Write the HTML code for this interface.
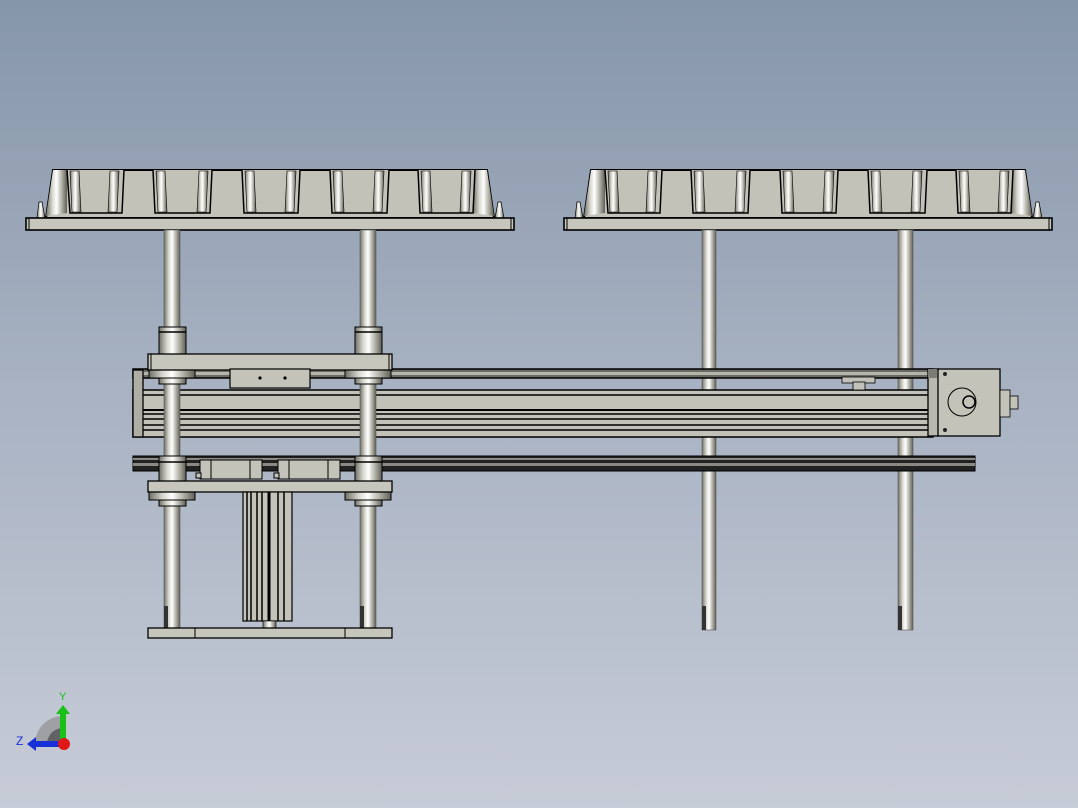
<!DOCTYPE html>
<html><head><style>
html,body{margin:0;padding:0;width:1078px;height:808px;overflow:hidden}
body{background:linear-gradient(#8696aa,#a9b3c3 50%,#c7ccd7)}
svg{position:absolute;left:0;top:0}
</style></head><body>
<svg width="1078" height="808" viewBox="0 0 1078 808" xmlns="http://www.w3.org/2000/svg">
<defs>
<linearGradient id="rod" x1="0" x2="1" y1="0" y2="0">
<stop offset="0" stop-color="#6f6f66"/><stop offset=".3" stop-color="#d8d8d0"/><stop offset=".5" stop-color="#ffffff"/><stop offset=".75" stop-color="#b0b0a6"/><stop offset="1" stop-color="#5f5f57"/></linearGradient>
<g id="tray">
<polygon points="53,170 487,170 494,218 46,218" fill="#c2c2b8" stroke="#000" stroke-width="2"/>
<polygon points="53,170 67,170 67,213 46,216" fill="url(#rod)"/>
<polygon points="473,170 487,170 494,216 473,213" fill="url(#rod)"/>
<g stroke="#000" stroke-width="1.5" fill="#c2c2b8">
<path d="M67,170 L70,213 L122,213 L124,170"/>
<path d="M153,170 L155,213 L210,213 L212,170"/>
<path d="M242,170 L244,213 L298,213 L300,170"/>
<path d="M330,170 L332,213 L387,213 L389,170"/>
<path d="M418,170 L420,213 L473,213 L475,170"/>
</g>
<g fill="url(#rod)" stroke="#000" stroke-width=".6">
<polygon points="70,171 79,171 81,212 72,212"/><polygon points="110,171 119,171 117,212 108,212"/>
<polygon points="156,171 165,171 167,212 158,212"/><polygon points="199,171 208,171 206,212 197,212"/>
<polygon points="245,171 254,171 256,212 247,212"/><polygon points="287,171 296,171 294,212 285,212"/>
<polygon points="333,171 342,171 344,212 335,212"/><polygon points="375,171 384,171 382,212 373,212"/>
<polygon points="421,171 430,171 432,212 423,212"/><polygon points="462,171 471,171 469,212 460,212"/>
</g>
<polygon points="37,218 39,202 42,202 45,218" fill="url(#rod)" stroke="#000" stroke-width=".7"/>
<polygon points="495,218 498,202 501,202 504,218" fill="url(#rod)" stroke="#000" stroke-width=".7"/>
<rect x="26" y="218" width="488" height="12" fill="#c6c6bc" stroke="#000" stroke-width="1.6"/>
<line x1="29" y1="218" x2="29" y2="230" stroke="#000"/><line x1="511" y1="218" x2="511" y2="230" stroke="#000"/>
</g>
</defs>
<use href="#tray"/>
<use href="#tray" x="538"/>

<rect x="702" y="230" width="14" height="400" fill="url(#rod)" stroke="#555" stroke-width=".6"/>
<rect x="898" y="230" width="15" height="400" fill="url(#rod)" stroke="#555" stroke-width=".6"/>
<rect x="702" y="606" width="4" height="24" fill="#333"/><rect x="898" y="606" width="4" height="24" fill="#333"/>

<rect x="133" y="369" width="800" height="9" fill="#6a6a63" stroke="#000" stroke-width="1.5"/>
<rect x="133" y="372" width="800" height="3" fill="#b5b5ac"/>
<rect x="133" y="390" width="800" height="47" fill="#c2c2b8" stroke="#000" stroke-width="1.5"/>
<g stroke="#000" stroke-width="1.5">
<line x1="133" y1="395" x2="933" y2="395"/><line x1="133" y1="410" x2="933" y2="410" stroke-width="2"/>
<line x1="133" y1="414" x2="933" y2="414"/><line x1="133" y1="419" x2="933" y2="419"/>
<line x1="133" y1="425" x2="933" y2="425"/><line x1="133" y1="430" x2="933" y2="430"/>
</g>
<rect x="133" y="370" width="10" height="67" fill="#aeaea5" stroke="#000" stroke-width="1.3"/>
<rect x="842" y="377" width="33" height="6" fill="#c2c2b8" stroke="#000" stroke-width=".8"/>
<rect x="853" y="382" width="12" height="8" fill="#c2c2b8" stroke="#000" stroke-width=".8"/>
<rect x="928" y="369" width="11" height="67" fill="#b8b8ae" stroke="#000" stroke-width="1.3"/>
<rect x="928" y="369" width="9" height="9" fill="#7c7c74"/>
<rect x="938" y="369" width="62" height="67" fill="#c3c3b9" stroke="#000" stroke-width="1.3"/>
<circle cx="962" cy="402" r="14" fill="none" stroke="#000"/>
<circle cx="969" cy="402" r="6" fill="none" stroke="#000" stroke-width="1.5"/>
<circle cx="945" cy="374" r="2" fill="#222"/><circle cx="945" cy="430" r="2" fill="#222"/>
<rect x="1000" y="390" width="10" height="27" fill="#c3c3b9" stroke="#000" stroke-width=".8"/>
<rect x="1010" y="396" width="8" height="13" fill="#c3c3b9" stroke="#000" stroke-width=".8"/>

<rect x="133" y="456" width="842" height="15" fill="#222" stroke="#000"/>
<rect x="133" y="458" width="842" height="2" fill="#8a8a82"/>
<rect x="133" y="463" width="842" height="3" fill="#8a8a82"/>

<rect x="164" y="230" width="16" height="400" fill="url(#rod)" stroke="#555" stroke-width=".6"/>
<rect x="360" y="230" width="16" height="400" fill="url(#rod)" stroke="#555" stroke-width=".6"/>
<rect x="164" y="606" width="4" height="24" fill="#333"/><rect x="360" y="606" width="4" height="24" fill="#333"/>
<g fill="url(#rod)" stroke="#000" stroke-width="1">
<rect x="159" y="327" width="27" height="28"/><rect x="355" y="327" width="27" height="28"/>
<rect x="149" y="370" width="46" height="8"/><rect x="345" y="370" width="46" height="8"/>
<rect x="159" y="378" width="27" height="6"/><rect x="355" y="378" width="27" height="6"/>
<rect x="159" y="456" width="27" height="25"/><rect x="355" y="456" width="27" height="25"/>
<rect x="149" y="492" width="46" height="8"/><rect x="345" y="492" width="46" height="8"/>
<rect x="159" y="500" width="27" height="6"/><rect x="355" y="500" width="27" height="6"/>
</g>
<line x1="159" y1="332" x2="186" y2="332" stroke="#000" stroke-width="1.5"/><line x1="355" y1="332" x2="382" y2="332" stroke="#000" stroke-width="1.5"/>
<line x1="159" y1="462" x2="186" y2="462" stroke="#000" stroke-width="1.5"/><line x1="355" y1="462" x2="382" y2="462" stroke="#000" stroke-width="1.5"/>
<rect x="148" y="354" width="244" height="16" fill="#c6c6bc" stroke="#000" stroke-width="1.3"/>
<line x1="151" y1="354" x2="151" y2="370" stroke="#000"/><line x1="389" y1="354" x2="389" y2="370" stroke="#000"/>
<rect x="230" y="369" width="80" height="19" fill="#c3c3b9" stroke="#000" stroke-width="1.2"/>
<circle cx="260" cy="378" r="1.6" fill="#000"/><circle cx="285" cy="378" r="1.6" fill="#000"/>
<g fill="#c3c3b9" stroke="#000" stroke-width="1">
<rect x="200" y="460" width="62" height="19"/><rect x="278" y="460" width="62" height="19"/>
<rect x="196" y="473" width="5" height="5"/><rect x="274" y="473" width="5" height="5"/>
</g>
<line x1="211" y1="460" x2="211" y2="479" stroke="#000"/><line x1="250" y1="460" x2="250" y2="479" stroke="#000"/>
<line x1="289" y1="460" x2="289" y2="479" stroke="#000"/><line x1="328" y1="460" x2="328" y2="479" stroke="#000"/>
<rect x="148" y="481" width="244" height="11" fill="#c6c6bc" stroke="#000" stroke-width="1.3"/>
<rect x="243" y="492" width="49" height="129" fill="#c3c3b9" stroke="#000" stroke-width="1.2"/>
<g stroke="#000" stroke-width="1.5">
<line x1="247" y1="492" x2="247" y2="621"/><line x1="251" y1="492" x2="251" y2="621"/>
<line x1="257" y1="492" x2="257" y2="621"/><line x1="262" y1="492" x2="262" y2="621"/>
<line x1="269" y1="492" x2="269" y2="621" stroke-width="3"/><line x1="278" y1="492" x2="278" y2="621"/>
<line x1="284" y1="492" x2="284" y2="621"/>
</g>
<rect x="263" y="621" width="13" height="7" fill="url(#rod)" stroke="#000" stroke-width=".6"/>
<rect x="148" y="628" width="244" height="10" fill="#c6c6bc" stroke="#000" stroke-width="1.3"/>
<line x1="195" y1="628" x2="195" y2="638" stroke="#000"/><line x1="345" y1="628" x2="345" y2="638" stroke="#000"/>

<path d="M63,744 L35,744 A28,28 0 0 1 63,716 Z" fill="#9ea0a4"/>
<path d="M63,744 L47,744 A16,16 0 0 1 63,728 Z" fill="#606266"/>
<rect x="60" y="712" width="6" height="32" fill="#18c018"/>
<polygon points="56,714 63,705 70,714" fill="#18c018"/>
<rect x="35" y="741" width="28" height="6" fill="#1830d8"/>
<polygon points="36,737 27,744 36,751" fill="#1830d8"/>
<circle cx="64" cy="744" r="6" fill="#e01818"/>
<text x="59" y="700" font-family="Liberation Sans,sans-serif" font-size="11" fill="#18c018">Y</text>
<text x="16" y="745" font-family="Liberation Sans,sans-serif" font-size="12" fill="#1830d8">Z</text>
</svg>
</body></html>
